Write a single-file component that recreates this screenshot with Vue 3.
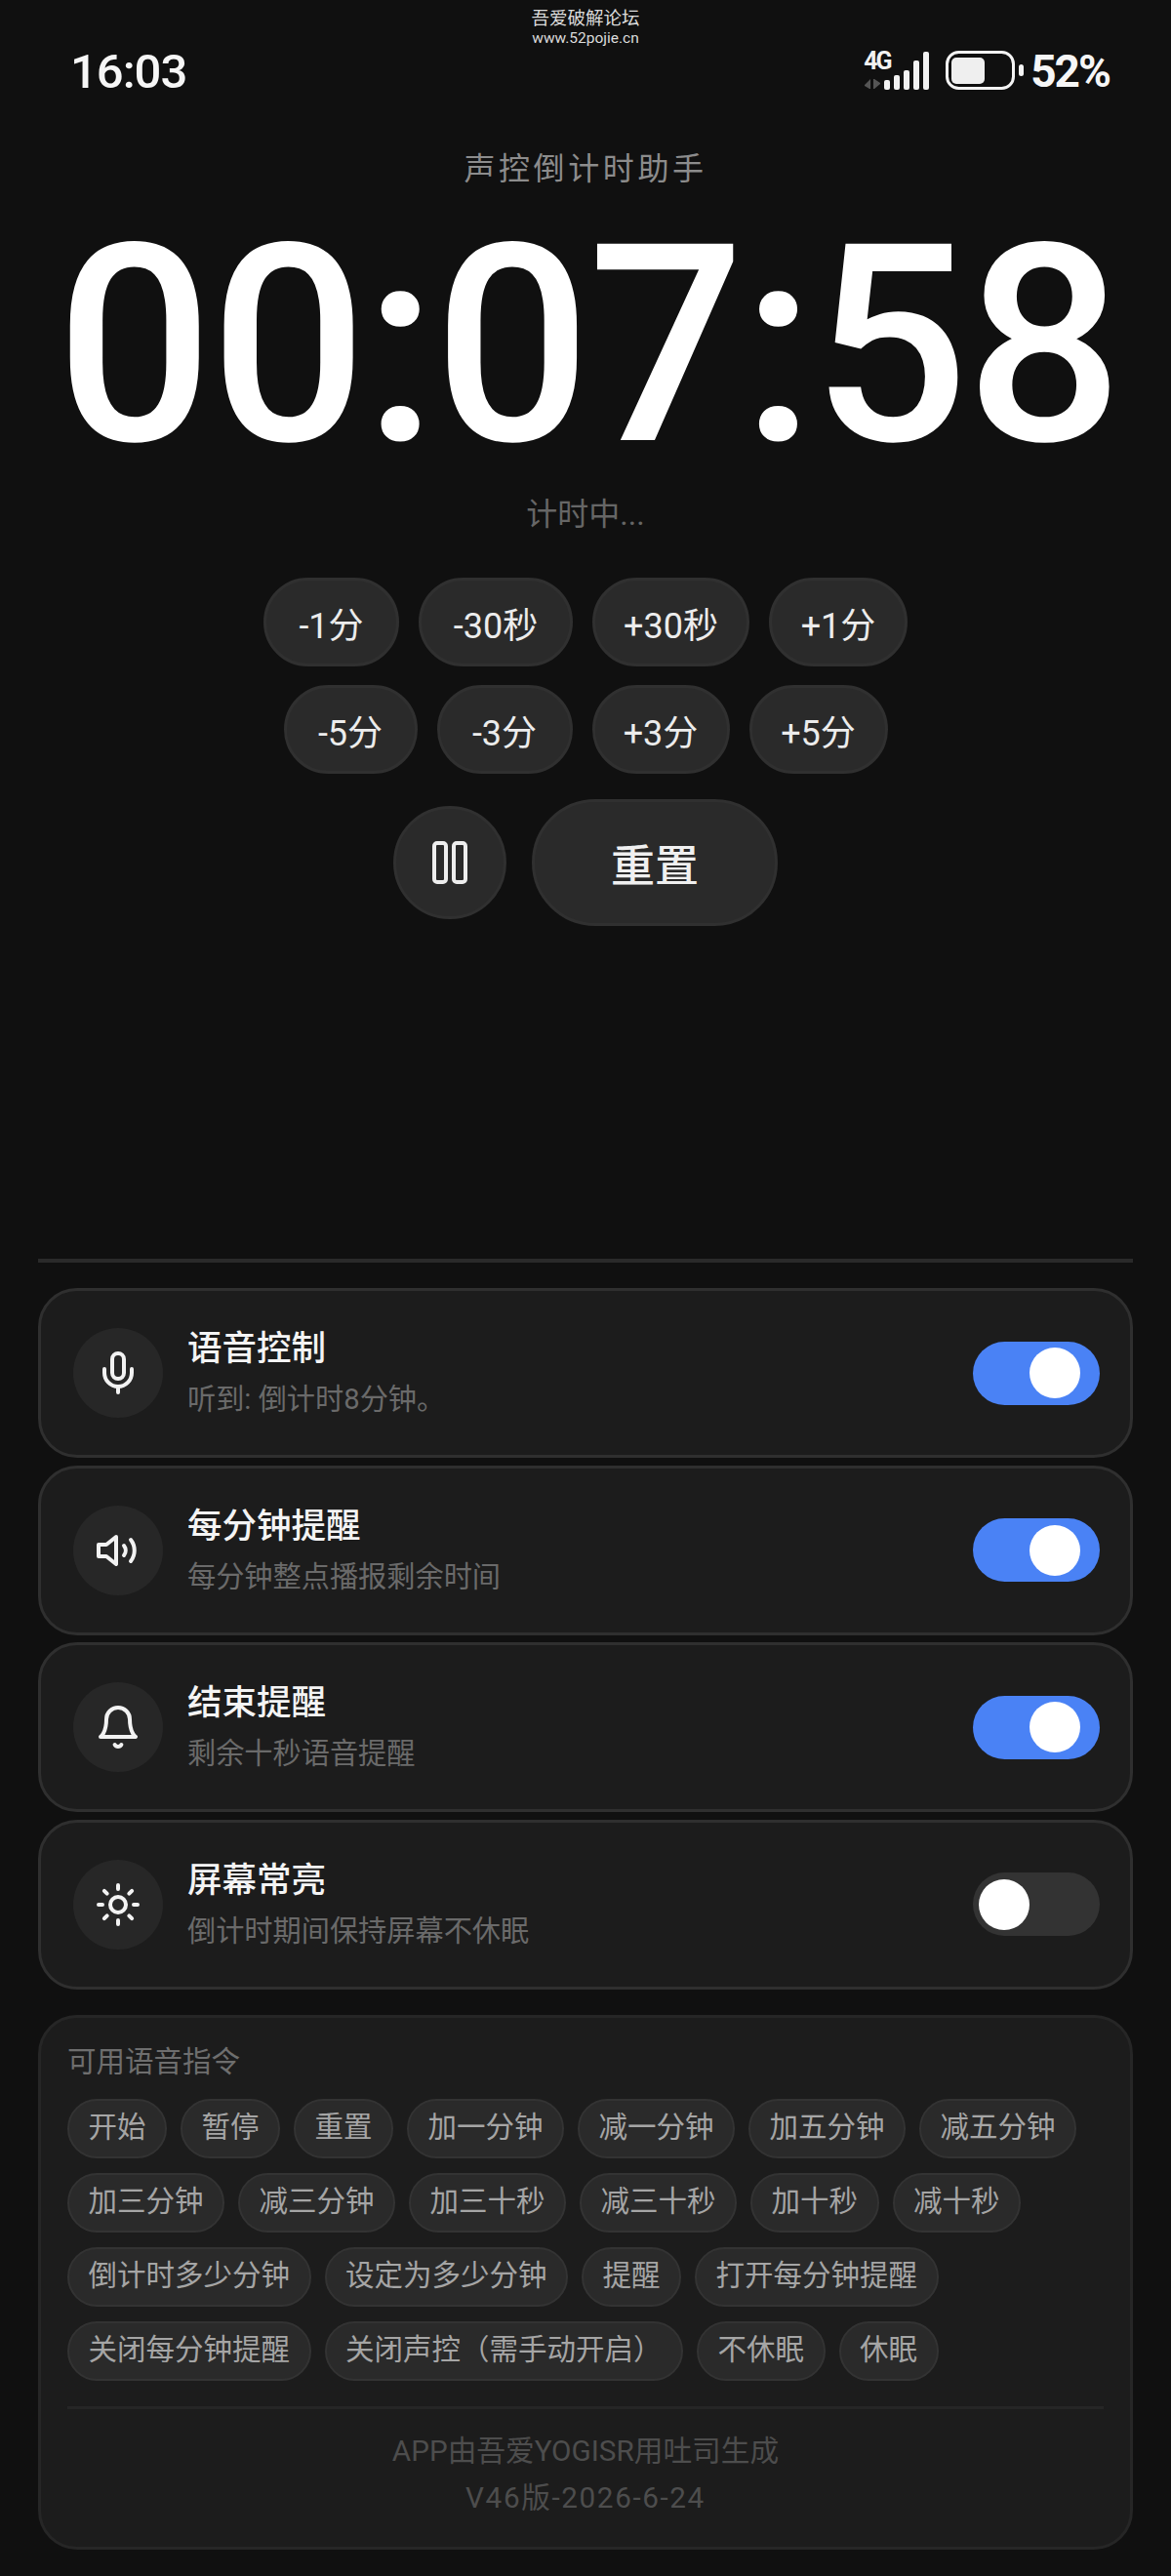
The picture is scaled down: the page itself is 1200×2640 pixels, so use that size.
<script setup>
const rowOne = [
  { t: '-1分', w: 139 }, { t: '-30秒', w: 158 }, { t: '+30秒', w: 161 }, { t: '+1分', w: 142 }
]
const rowTwo = [
  { t: '-5分', w: 137 }, { t: '-3分', w: 139 }, { t: '+3分', w: 141 }, { t: '+5分', w: 142 }
]
const cards = [
  { icon: 'mic', title: '语音控制', sub: '听到: 倒计时8分钟。', on: true },
  { icon: 'vol', title: '每分钟提醒', sub: '每分钟整点播报剩余时间', on: true },
  { icon: 'bell', title: '结束提醒', sub: '剩余十秒语音提醒', on: true },
  { icon: 'sun', title: '屏幕常亮', sub: '倒计时期间保持屏幕不休眠', on: false }
]
const commands = [
  '开始', '暂停', '重置', '加一分钟', '减一分钟', '加五分钟', '减五分钟',
  '加三分钟', '减三分钟', '加三十秒', '减三十秒', '加十秒', '减十秒',
  '倒计时多少分钟', '设定为多少分钟', '提醒', '打开每分钟提醒',
  '关闭每分钟提醒', '关闭声控（需手动开启）', '不休眠', '休眠'
]
const bars = [
  { x: 0, h: 10 }, { x: 10, h: 15 }, { x: 20, h: 20 }, { x: 30, h: 30 }, { x: 40, h: 39 }
]
</script>

<template>
  <div class="page">
    <div class="watermark">
      <div class="wm-a">吾爱破解论坛</div>
      <div class="wm-b">www.52pojie.cn</div>
    </div>

    <section class="top">
      <header class="status">
        <span class="clock">16:03</span>
        <div class="status-right">
          <div class="net">
            <span class="net-label">4G</span>
            <svg class="net-arrows" width="18" height="12" viewBox="0 0 18 12">
              <path d="M0 7 6 1v10H5L0 8Z M9 1h1l6 4v1l-6 5H9Z" fill="#555" />
            </svg>
            <svg class="net-bars" width="46" height="40" viewBox="0 0 46 40">
              <rect v-for="b in bars" :key="b.x" :x="b.x" :y="40 - b.h" width="6" :height="b.h" rx="2" fill="#f2f2f2" />
            </svg>
          </div>
          <svg class="battery" width="80" height="40" viewBox="0 0 80 40">
            <rect x="1.5" y="1.5" width="68" height="37" rx="12" fill="none" stroke="#f4f4f4" stroke-width="3" />
            <rect x="6" y="7" width="34" height="27" rx="5" fill="#efefef" />
            <rect x="75" y="14" width="5" height="12" rx="2.5" fill="#f4f4f4" />
          </svg>
          <span class="percent">52%</span>
        </div>
      </header>

      <h1 class="title">声控倒计时助手</h1>
      <div class="timer">00:07:58</div>
      <div class="state">计时中...</div>

      <div class="adjust">
        <button v-for="b in rowOne" :key="b.t" class="adj" :style="{ width: b.w + 'px' }">{{ b.t }}</button>
      </div>
      <div class="adjust">
        <button v-for="b in rowTwo" :key="b.t" class="adj" :style="{ width: b.w + 'px' }">{{ b.t }}</button>
      </div>

      <div class="main-controls">
        <button class="pause" aria-label="暂停">
          <svg width="48" height="48" viewBox="0 0 48 48" fill="none" stroke="#eeeeee" stroke-width="4">
            <rect x="8" y="4" width="12" height="40" rx="3" />
            <rect x="28" y="4" width="12" height="40" rx="3" />
          </svg>
        </button>
        <button class="reset">重置</button>
      </div>
    </section>

    <div class="rule"></div>

    <section class="cards">
      <article v-for="c in cards" :key="c.title" class="card">
        <div class="icon-wrap">
          <svg width="48" height="48" viewBox="0 0 24 24" fill="none" stroke="#f2f2f2" stroke-width="2" stroke-linecap="round" stroke-linejoin="round">
            <template v-if="c.icon === 'mic'">
              <path d="M12 2a3 3 0 0 0-3 3v7a3 3 0 0 0 6 0V5a3 3 0 0 0-3-3Z" />
              <path d="M19 10v2a7 7 0 0 1-14 0v-2" />
              <path d="M12 19v3" />
            </template>
            <template v-else-if="c.icon === 'vol'">
              <path d="M11 5 6 9H2v6h4l5 4Z" />
              <path d="M15 9.5a4 4 0 0 1 0 5" />
              <path d="M18.5 6.5a9 9 0 0 1 0 11" />
            </template>
            <template v-else-if="c.icon === 'bell'">
              <path d="M6 8a6 6 0 0 1 12 0c0 7 3 9 3 9H3s3-2 3-9" />
              <path d="M10.3 21a1.94 1.94 0 0 0 3.4 0" />
            </template>
            <template v-else>
              <circle cx="12" cy="12" r="4" />
              <path d="M12 2v2M12 20v2M4.93 4.93l1.41 1.41M17.66 17.66l1.41 1.41M2 12h2M20 12h2M6.34 17.66l-1.41 1.41M19.07 4.93l-1.41 1.41" />
            </template>
          </svg>
        </div>
        <div class="card-text">
          <div class="card-title">{{ c.title }}</div>
          <div class="card-sub">{{ c.sub }}</div>
        </div>
        <div class="toggle" :class="{ on: c.on }"><span class="knob"></span></div>
      </article>
    </section>

    <section class="panel">
      <div class="panel-title">可用语音指令</div>
      <div class="chips">
        <span v-for="c in commands" :key="c" class="chip">{{ c }}</span>
      </div>
      <div class="panel-rule"></div>
      <footer class="credits">
        <div>APP由吾爱YOGISR用吐司生成</div>
        <div class="version">V46版-2026-6-24</div>
      </footer>
    </section>
  </div>
</template>

<style>
html, body { margin: 0; background: #101010; }
</style>

<style scoped>
* { box-sizing: border-box; }
.page {
  position: relative;
  width: 1200px;
  height: 2640px;
  overflow: hidden;
  background: #101010;
  color: #fff;
  font-family: Roboto, "Noto Sans CJK SC", sans-serif;
}
.watermark {
  position: absolute;
  top: 8px;
  left: 0;
  width: 1200px;
  text-align: center;
  color: #dcdcdc;
}
.wm-a { font-size: 18.5px; line-height: 22px; }
.wm-b { font-size: 15.5px; line-height: 18px; }

.top { height: 1290px; display: flex; flex-direction: column; align-items: center; }
.status {
  width: 100%;
  height: 150px;
  padding: 49px 63px 0 72px;
  display: flex;
  justify-content: space-between;
  align-items: flex-start;
}
.clock { font-size: 49px; line-height: 50px; font-weight: 500; letter-spacing: -1px; color: #f6f6f6; }
.status-right { display: flex; align-items: flex-start; margin-top: 3px; }
.net { position: relative; width: 72px; height: 40px; margin-right: 12px; }
.net-label {
  position: absolute; left: 0; top: 0;
  font-size: 25px; line-height: 22px; font-weight: 700; letter-spacing: -2px; color: #f2f2f2;
}
.net-arrows { position: absolute; left: 1px; top: 28px; }
.net-bars { position: absolute; left: 21px; top: 0; }
.battery { margin-right: 7px; }
.percent { font-size: 46px; line-height: 42px; font-weight: 700; letter-spacing: -2px; color: #f6f6f6; }

.title {
  margin: 0;
  font-size: 32px;
  line-height: 46px;
  font-weight: 400;
  letter-spacing: 3.6px;
  color: #8c8c8c;
}
.timer {
  margin-top: 38px;
  padding-left: 5px;
  font-size: 283px;
  line-height: 240px;
  font-weight: 500;
  letter-spacing: -3px;
  color: #fff;
}
.state {
  margin-top: 31px;
  font-size: 32px;
  line-height: 44px;
  color: #666666;
}
.adjust { display: flex; gap: 20px; margin-top: 19px; }
.state + .adjust { margin-top: 43px; }
button { font-family: inherit; margin: 0; }
.adj {
  height: 91px;
  padding: 0;
  border: 3px solid #303030;
  border-radius: 46px;
  background: #2a2a2a;
  color: #ececec;
  font-size: 36px;
}
.main-controls { display: flex; align-items: center; gap: 26px; margin-top: 26px; }
.pause {
  width: 116px;
  height: 116px;
  padding: 0;
  border: 3px solid #303030;
  border-radius: 50%;
  background: #2a2a2a;
  display: flex;
  align-items: center;
  justify-content: center;
}
.reset {
  width: 252px;
  height: 130px;
  border: 3px solid #303030;
  border-radius: 65px;
  background: #2a2a2a;
  color: #f0f0f0;
  font-size: 45px;
  font-weight: 500;
}

.rule { height: 4px; margin: 0 39px; background: #2a2a2a; }

.cards { margin: 26px 39px 0; display: flex; flex-direction: column; gap: 7.5px; }
.card {
  height: 174px;
  padding: 0 31px 0 33px;
  border: 3px solid #2f2f2f;
  border-radius: 40px;
  background: #1c1c1c;
  display: flex;
  align-items: center;
}
.icon-wrap {
  width: 92px;
  height: 92px;
  border-radius: 50%;
  background: #272727;
  display: flex;
  align-items: center;
  justify-content: center;
  flex: none;
}
.card-text { flex: 1; margin-left: 25px; margin-bottom: 2px; }
.card-title { font-size: 35.5px; line-height: 48px; font-weight: 500; color: #f4f4f4; }
.card-sub { margin-top: 8px; font-size: 29.2px; line-height: 40px; color: #6a6a6a; }
.toggle {
  position: relative;
  width: 130px;
  height: 65px;
  border-radius: 33px;
  background: #333333;
  flex: none;
}
.toggle.on { background: #4a82f5; }
.knob {
  position: absolute;
  top: 6.5px;
  left: 6px;
  width: 52px;
  height: 52px;
  border-radius: 50%;
  background: #fff;
}
.toggle.on .knob { left: 58px; }

.panel {
  height: 548px;
  margin: 26px 39px 0;
  padding: 24px 27px 0;
  border: 3px solid #262626;
  border-radius: 40px;
  background: #1c1c1c;
}
.panel-title { font-size: 29.5px; line-height: 42px; color: #6e6e6e; }
.chips { margin-top: 17px; display: flex; flex-wrap: wrap; gap: 14.5px 14px; }
.chip {
  height: 61.5px;
  padding: 0 19.5px;
  border: 2.5px solid #333333;
  border-radius: 31px;
  background: #2a2a2a;
  color: #a5a5a5;
  font-size: 29.5px;
  line-height: 54px;
  white-space: nowrap;
}
.panel-rule { height: 3px; margin-top: 26px; background: #262626; }
.credits {
  margin-top: 19px;
  text-align: center;
  font-size: 29.7px;
  line-height: 48px;
  color: #4d4d4d;
}
.version { letter-spacing: 1.6px; }
</style>
